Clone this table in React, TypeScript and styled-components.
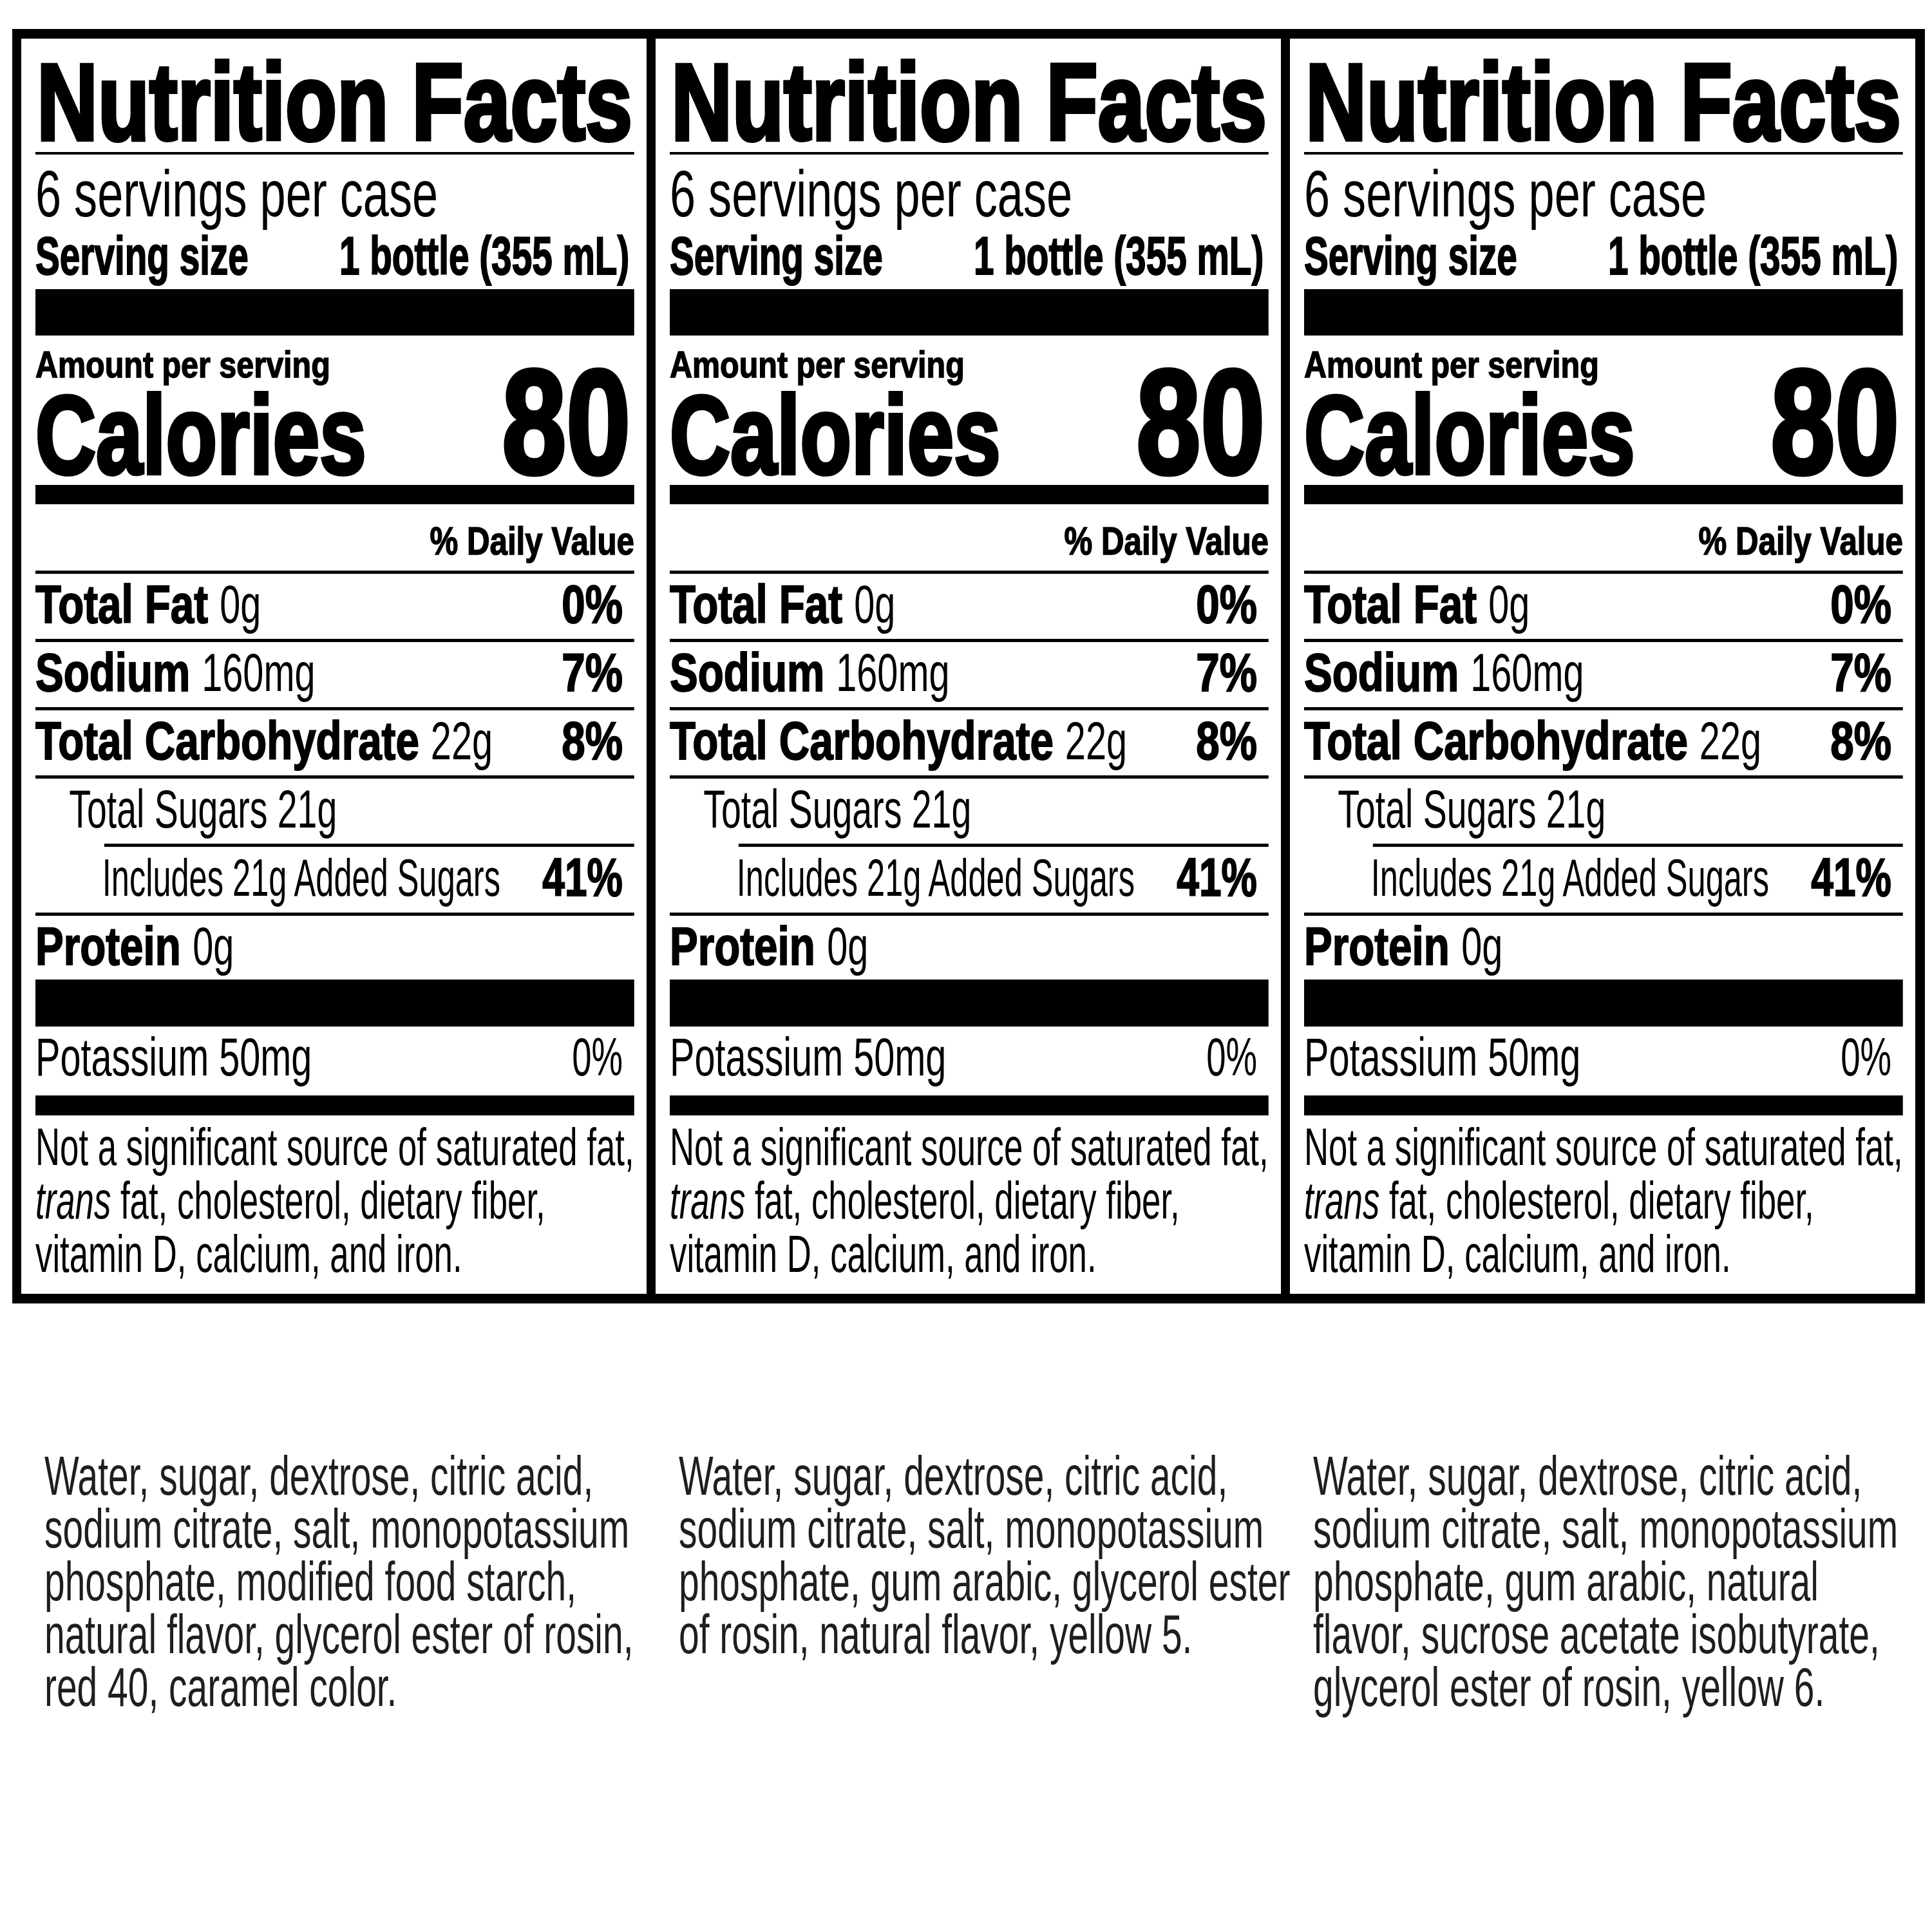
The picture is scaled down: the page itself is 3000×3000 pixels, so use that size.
import React from "react"
import styled, { createGlobalStyle } from "styled-components"

const FONT = `"Liberation Sans", Arial, sans-serif`

// No condensed face is installed, so the label body is drawn with
// Liberation Sans and squeezed horizontally to the condensed width.
const K = 0.78
const u = (px: number) => px / K

const GlobalStyle = createGlobalStyle`
    html, body {
        margin: 0;
        padding: 0;
        background: #fff;
    }
    body {
        font-family: ${FONT};
        color: #000;
    }
`

const Page = styled.div`
    width: 3000px;
    height: 3000px;
    box-sizing: border-box;
    padding: 45px 0 0 19px;
    overflow: hidden;
`

const Labels = styled.div`
    display: grid;
    grid-template-columns: repeat(3, 971px);
    gap: 14px;
    width: max-content;
    padding: 15px 15px 15px 14px;
    background: #000;
`

const Panel = styled.section`
    background: #fff;
    padding: 23px 19px 20px 22px;
    white-space: nowrap;
`

const LabelBody = styled.div`
    width: calc(100% / ${K});
    transform: scaleX(${K});
    transform-origin: 0 0;
    display: flex;
    flex-direction: column;
`

const Squeeze = styled.span<{ $k: number; $right?: boolean }>`
    display: inline-block;
    transform: scaleX(${(p) => p.$k});
    transform-origin: ${(p) => (p.$right ? "right" : "left")} center;
`

const Title = styled.h1`
    margin: 0;
    font-size: 168px;
    line-height: 153px;
    font-weight: 700;
    -webkit-text-stroke: 6px #000;
    padding-left: 3px;
`

const Rule = styled.div<{ $h: number; $inset?: number }>`
    height: ${(p) => p.$h}px;
    margin-left: ${(p) => u(p.$inset || 0)}px;
    background: #000;
    flex-shrink: 0;
`

const Servings = styled.div`
    font-size: 102px;
    line-height: 123px;
`

const ServingSize = styled.div`
    display: flex;
    justify-content: space-between;
    font-size: 84px;
    line-height: 68px;
    font-weight: 700;
    padding-right: ${u(8)}px;
    margin-bottom: 18px;
    -webkit-text-stroke: 2px #000;
`

const CaloriesBlock = styled.div`
    display: flex;
    justify-content: space-between;
    align-items: flex-end;
    padding-top: 13px;
`

const CaloriesText = styled.div`
    display: flex;
    flex-direction: column;
`

const AmountLabel = styled.div`
    font-size: 57px;
    line-height: 64px;
    font-weight: 700;
    -webkit-text-stroke: 1.5px #000;
`

const CaloriesLabel = styled.div`
    font-size: 172px;
    line-height: 155px;
    font-weight: 700;
    -webkit-text-stroke: 6px #000;
`

const CaloriesValue = styled.div`
    font-size: 230px;
    line-height: 195px;
    font-weight: 700;
    padding-right: ${u(6)}px;
    -webkit-text-stroke: 7px #000;
`

const DailyValueHead = styled.div`
    text-align: right;
    font-size: 61px;
    line-height: 80px;
    font-weight: 700;
    padding: 17px 0 6px;
    -webkit-text-stroke: 1.5px #000;
`

const NutrientRow = styled.div<{ $indent?: number; $gap?: number }>`
    display: flex;
    justify-content: space-between;
    font-size: 84px;
    line-height: 94px;
    padding-left: ${(p) => u(p.$indent || 0)}px;
    padding-right: ${u(18)}px;
    padding-bottom: ${(p) => (p.$gap === undefined ? 7 : p.$gap)}px;

    & > :first-child {
        min-width: 0;
    }
`

const Name = styled.b`
    font-weight: 700;
    -webkit-text-stroke: 2px #000;
`

const Percent = styled.span<{ $light?: boolean }>`
    flex-shrink: 0;
    font-weight: ${(p) => (p.$light ? 400 : 700)};
    -webkit-text-stroke: ${(p) => (p.$light ? 0 : 2)}px #000;
`

const Footnote = styled.p`
    margin: 0;
    padding-top: 8px;
    font-size: 81px;
    line-height: 83px;

    i {
        font-style: italic;
    }
`

const Ingredients = styled.div`
    display: grid;
    grid-template-columns: repeat(3, 971px);
    gap: 14px;
    padding: 0 15px 0 14px;
    margin-top: 226px;
`

const IngredientColumn = styled.div`
    padding-left: 36px;
    font-size: 86px;
    line-height: 82px;
    color: #1e1e1e;
    white-space: nowrap;
`

const ingredientLines = [
    [
        "Water, sugar, dextrose, citric acid,",
        "sodium citrate, salt, monopotassium",
        "phosphate, modified food starch,",
        "natural flavor, glycerol ester of rosin,",
        "red 40, caramel color.",
    ],
    [
        "Water, sugar, dextrose, citric acid,",
        "sodium citrate, salt, monopotassium",
        "phosphate, gum arabic, glycerol ester",
        "of rosin, natural flavor, yellow 5.",
    ],
    [
        "Water, sugar, dextrose, citric acid,",
        "sodium citrate, salt, monopotassium",
        "phosphate, gum arabic, natural",
        "flavor, sucrose acetate isobutyrate,",
        "glycerol ester of rosin, yellow 6.",
    ],
]

function Label() {
    return (
        <Panel>
            <LabelBody>
                <Title>Nutrition Facts</Title>
                <Rule $h={4} />
                <Servings>
                    <Squeeze $k={0.906}>6 servings per case</Squeeze>
                </Servings>
                <ServingSize>
                    <Squeeze $k={0.865}>Serving size</Squeeze>
                    <Squeeze $k={0.865} $right>
                        1 bottle (355 mL)
                    </Squeeze>
                </ServingSize>
                <Rule $h={72} />
                <CaloriesBlock>
                    <CaloriesText>
                        <AmountLabel>
                            <Squeeze $k={1.09}>Amount per serving</Squeeze>
                        </AmountLabel>
                        <CaloriesLabel>
                            <Squeeze $k={0.97}>Calories</Squeeze>
                        </CaloriesLabel>
                    </CaloriesText>
                    <CaloriesValue>80</CaloriesValue>
                </CaloriesBlock>
                <Rule $h={30} />
                <DailyValueHead>
                    <Squeeze $k={1.035} $right>
                        % Daily Value
                    </Squeeze>
                </DailyValueHead>
                <Rule $h={5} />
                <NutrientRow>
                    <span>
                        <Name>Total Fat</Name> <Squeeze $k={0.88}>0g</Squeeze>
                    </span>
                    <Percent>0%</Percent>
                </NutrientRow>
                <Rule $h={5} />
                <NutrientRow>
                    <span>
                        <Name>Sodium</Name> <Squeeze $k={0.88}>160mg</Squeeze>
                    </span>
                    <Percent>7%</Percent>
                </NutrientRow>
                <Rule $h={5} />
                <NutrientRow>
                    <span>
                        <Name>Total Carbohydrate</Name> <Squeeze $k={0.88}>22g</Squeeze>
                    </span>
                    <Percent>8%</Percent>
                </NutrientRow>
                <Rule $h={5} />
                <NutrientRow $indent={52}>
                    <span>
                        <Squeeze $k={0.846}>Total Sugars 21g</Squeeze>
                    </span>
                </NutrientRow>
                <Rule $h={5} $inset={107} />
                <NutrientRow $indent={104}>
                    <span>
                        <Squeeze $k={0.8} style={{ fontSize: 81 }}>
                            Includes 21g Added Sugars
                        </Squeeze>
                    </span>
                    <Percent>
                        <Squeeze $k={0.95} $right>
                            41%
                        </Squeeze>
                    </Percent>
                </NutrientRow>
                <Rule $h={5} />
                <NutrientRow $gap={5}>
                    <span>
                        <Name>Protein</Name> <Squeeze $k={0.88}>0g</Squeeze>
                    </span>
                </NutrientRow>
                <Rule $h={73} />
                <NutrientRow $gap={13}>
                    <span>
                        <Squeeze $k={0.88}>Potassium 50mg</Squeeze>
                    </span>
                    <Percent $light>
                        <Squeeze $k={0.833} $right>
                            0%
                        </Squeeze>
                    </Percent>
                </NutrientRow>
                <Rule $h={31} />
                <Footnote>
                    <Squeeze $k={0.835}>
                        Not a significant source of saturated fat,
                        <br />
                        <i>trans</i> fat, cholesterol, dietary fiber,
                        <br />
                        vitamin D, calcium, and iron.
                    </Squeeze>
                </Footnote>
            </LabelBody>
        </Panel>
    )
}

export default function App() {
    return (
        <Page>
            <GlobalStyle />
            <Labels>
                <Label />
                <Label />
                <Label />
            </Labels>
            <Ingredients>
                {ingredientLines.map((lines, i) => (
                    <IngredientColumn key={i}>
                        <Squeeze $k={0.662}>
                            {lines.map((line, j) => (
                                <React.Fragment key={j}>
                                    {line}
                                    {j < lines.length - 1 && <br />}
                                </React.Fragment>
                            ))}
                        </Squeeze>
                    </IngredientColumn>
                ))}
            </Ingredients>
        </Page>
    )
}
